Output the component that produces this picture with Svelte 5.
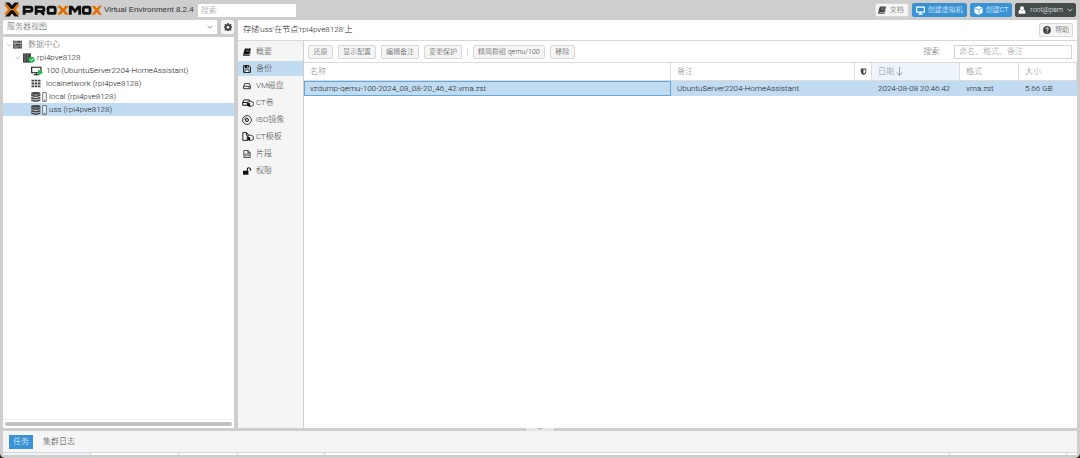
<script>
  const tree = [
    { label: '数据中心', icon: 'server', level: 0, open: true },
    { label: 'rpi4pve8128', icon: 'node', level: 1, open: true },
    { label: '100 (UbuntuServer2204-HomeAssistant)', icon: 'vm', level: 2 },
    { label: 'localnetwork (rpi4pve8128)', icon: 'grid', level: 2 },
    { label: 'local (rpi4pve8128)', icon: 'storage', level: 2 },
    { label: 'uss (rpi4pve8128)', icon: 'storage', level: 2 }
  ];
  const menu = [
    ['book', '概要'], ['floppy', '备份'], ['hdd', 'VM磁盘'], ['ctdisk', 'CT卷'],
    ['disc', 'ISO镜像'], ['cttemplate', 'CT模板'], ['code', '片段'], ['unlock', '权限']
  ];
  const actions = ['还原', '显示配置', '编辑备注', '变更保护'];
  const wide = { storage: 22, node: 18, vm: 18, ctdisk: 18, cttemplate: 18 };
  let node = $state(5);
  let tab = $state(1);
</script>

{#snippet icon(name)}
  <svg class="icon {name}" viewBox="0 0 {wide[name] ?? 14} 14" aria-hidden="true">
    {#if name === 'server'}
      <path d="M0 1h14v3.400H0zM0 5.400h14v3.400H0zM0 9.800h14v3.400H0z" fill="currentColor" />
      <path d="M1.500 2.700h6M1.500 7.100h3M1.500 11.500h6M11 2.700h1.500M11 7.100h1.500M11 11.500h1.500" stroke="#fff" stroke-width=".6" />
    {:else if name === 'node'}
      <path d="M0 0h12v14H0z" fill="currentColor" />
      <path d="M2 2.500h2M6 2.500h2M2 5.500h2M6 5.500h2M2 8.500h2M6 8.500h2M2 11.500h2" stroke="#999" stroke-width="1.200" />
      <circle cx="13" cy="9.500" r="4.500" fill="#21bf4b" />
      <path d="m10.700 9.500 1.700 1.700 3-3.300" fill="none" stroke="#fff" stroke-width="1.400" />
    {:else if name === 'vm'}
      <path d="M1 1.500h14v8H1zM8 9.500v3M4 12.700h7" fill="#fff" stroke="#111" stroke-width="1.600" />
      <path d="m10.500 4.500 7.500 5-7.500 4.500z" fill="#21bf4b" />
    {:else if name === 'grid'}
      <path d="M0 1h4v3H0zM5 1h4v3H5zM10 1h4v3h-4zM0 5.500h4v3H0zM5 5.500h4v3H5zM10 5.500h4v3h-4zM0 10h4v3H0zM5 10h4v3H5zM10 10h4v3h-4z" fill="currentColor" />
    {:else if name === 'storage'}
      <ellipse cx="6.500" cy="2" rx="6.500" ry="2" fill="currentColor" />
      <path d="M0 3.300q6.500 3 13 0v2.200q-6.500 3-13 0zM0 6.800q6.500 3 13 0V9q-6.500 3-13 0zM0 10.300q6.500 3 13 0v2q-6.500 3.200-13 0z" fill="currentColor" />
      <path d="M16.200.8h5v12.400h-5z" fill="#fff" fill-opacity=".8" stroke="currentColor" stroke-width="1" />
      <path d="M17.700 11.500h2" stroke="currentColor" />
    {:else if name === 'book'}
      <path d="M4.200 1h9.300q.5 0 .3.600l-2.600 8.800q-.3.900-1.200.900H2.400q-1 0-.6.800.2.500.8.500h8.200q.7 0 .9-.7l1.800-6v1.800L12 12.700q-.4 1.200-1.500 1.200H2.200Q0 13.800.2 11.600L2.800 2.200Q3.100 1 4.200 1z" fill="currentColor" />
      <path d="M5.500 3.700h5.300M4.900 5.800h5.300" stroke="#aaa" stroke-width=".9" />
    {:else if name === 'floppy'}
      <path d="M1 1h9.500L13 3.500V13H1z" fill="none" stroke="currentColor" stroke-width="1.600" />
      <path d="M3 1h7v4.500H3zM3 8h8v5H3z" fill="currentColor" />
      <path d="M7.500 1.700h1.500v2.500H7.500zM4.200 9.200h5.600v3H4.200z" fill="#fff" />
    {:else if name === 'hdd'}
      <path d="M1 7.500 3 2.800h8l2 4.700v4.200H1zM1 7.500h12M8.500 9.700h1M11 9.700h1" fill="none" stroke="currentColor" stroke-width="1.400" />
    {:else if name === 'ctdisk'}
      <path d="M.8 7 3 3h8l1.500 3M.8 7v4.300H9M.8 7H9" fill="none" stroke="currentColor" stroke-width="1.500" />
      <path d="m12.500 4.800 4.700 1.900v4.800l-4.700 2-4.700-2V6.700z" fill="#fff" stroke="currentColor" stroke-width="1.200" />
      <path d="m7.800 6.700 4.700 2v4.800l-4.700-2z" fill="currentColor" />
    {:else if name === 'disc'}
      <circle cx="7" cy="7" r="6.200" fill="none" stroke="currentColor" stroke-width="1.100" />
      <circle cx="7" cy="7" r="2" fill="none" stroke="currentColor" stroke-width="1.500" />
      <path d="M3 7q0-4 4-4" fill="none" stroke="currentColor" stroke-width=".6" />
    {:else if name === 'cttemplate'}
      <path d="M9 13H1V1h5.500l4 3.500M6.500 1v4H9" fill="none" stroke="currentColor" stroke-width="1.400" />
      <path d="m12.500 4.800 4.700 1.900v4.800l-4.700 2-4.700-2V6.700z" fill="#fff" stroke="currentColor" stroke-width="1.200" />
      <path d="m7.800 6.700 4.700 2v4.800l-4.700-2z" fill="currentColor" />
    {:else if name === 'code'}
      <path d="M1.500.8h7.300l3.700 3.700v8.700h-11zM8.500 1v3.800h4M5 6 3.300 8.500 5 11M9 6l1.700 2.500L9 11M7.500 6l-1 5" fill="none" stroke="currentColor" stroke-width="1.300" />
    {:else if name === 'unlock'}
      <path d="M0 6.500h9.500v7H0z" fill="currentColor" />
      <path d="M7.500 7V4q0-2.700 2.700-2.700T12.900 4v2.500" fill="none" stroke="currentColor" stroke-width="1.900" />
    {:else if name === 'gear'}
      <path d="M5.800 0h2.400l.4 2 1.200.5 1.700-1.200 1.800 1.800-1.200 1.600.5 1.200 1.900.4v2.400l-1.900.4-.5 1.200 1.200 1.600-1.800 1.800-1.700-1.200-1.200.5-.4 2H5.800l-.4-2-1.200-.5-1.700 1.200L.7 11.900l1.200-1.600-.5-1.200L0 8.700V6.300l1.400-.4.5-1.200L.7 3.100l1.800-1.800 1.700 1.200L5.400 2z" fill="currentColor" />
      <circle cx="7" cy="7.400" r="2.300" fill="#f5f5f5" />
    {:else if name === 'monitor'}
      <path d="M1 1.800h12v7.700H1zM7 9.500v3M3.500 12.700h7" fill="none" stroke="currentColor" stroke-width="1.700" />
    {:else if name === 'cube'}
      <path d="m7 0 6.300 2.800v7.700L7 14 .7 10.500V2.800z" fill="currentColor" />
      <path d="M1.800 3.600 7 5.800l5.200-2.200M7.700 6.800v5" fill="none" stroke="#3892d4" stroke-width="1.200" />
    {:else if name === 'user'}
      <circle cx="7" cy="3.800" r="3.500" fill="currentColor" />
      <path d="M1 13.500V10q0-3 3-3.300 3 2 6 0 3 .3 3 3.300v3.500z" fill="currentColor" />
    {:else if name === 'help'}
      <circle cx="7" cy="7" r="6.800" fill="currentColor" />
      <path d="M4.800 5.200q.2-2 2.300-2t2.200 1.800c0 1.500-2.200 1.500-2.200 3.300M7.100 9.700v1.800" fill="none" stroke="#fff" stroke-width="1.700" />
    {:else if name === 'shield'}
      <path d="M1.500 1h11v6q0 4.500-5.500 7-5.500-2.500-5.500-7z" fill="currentColor" />
      <path d="M7 3h3.700v4.200q0 2.500-3.700 4.300z" fill="#fff" />
    {:else if name === 'chevron'}
      <path d="m1.500 4.500 5.500 5 5.500-5" fill="none" stroke="currentColor" stroke-width="1.500" />
    {:else if name === 'arrow'}
      <path d="M7 0v13M2.500 8.500 7 13l4.500-4.500" fill="none" stroke="currentColor" stroke-width="1.300" />
    {/if}
  </svg>
{/snippet}

<div class="app">
  <header>
    <svg class="logo" viewBox="0 0 98 16" role="img" aria-label="Proxmox">
      <path d="M1 .5h4.500l2.500 3 2.500-3H15L9.900 6.600 8 8.600 6.100 6.600zM1 14.500h4.500l2.500-3 2.500 3H15L9.900 8.400 8 6.400 6.100 8.400z" fill="#111" />
      <path d="M0 2.500h3.200L7.300 7.500l-4.100 5H0l4-5zM16 2.500h-3.200L8.700 7.500l4.100 5H16l-4-5z" fill="#e57000" />
      <g fill="none" stroke="#111" stroke-width="2.800">
        <path d="M20.100 12.800V5.100h6q1.800 0 1.800 1.500v1.200q0 1.500-1.800 1.500h-6M32.100 12.800V5.100h6q1.800 0 1.800 1.500v1.200q0 1.500-1.800 1.500h-6M36.800 9.300l3.300 3.500" />
        <rect x="44" y="5.100" width="7.200" height="6.300" rx="1.500" />
        <path d="M66.300 12.800V5.100h1.300l3.400 4 3.400-4h1.300v7.700" />
        <rect x="79.300" y="5.100" width="6.700" height="6.300" rx="1.500" />
      </g>
      <path d="M53 3.700h3.700L59 6.500l2.300-2.800H65l-4 4.550 4 4.550h-3.700L59 10l-2.300 2.800H53l4-4.550zM87.500 3.700h3.200l2.050 2.700 2.050-2.700H98l-3.600 4.550L98 12.800h-3.200l-2.050-2.700-2.050 2.700h-3.200l3.600-4.550z" fill="#e57000" />
    </svg>
    <span class="version">Virtual Environment 8.2.4</span>
    <input class="global-search" aria-label="搜索" placeholder="搜索" />
    <span class="grow"></span>
    <button class="btn docs">{@render icon('book')}文档</button>
    <button class="btn primary">{@render icon('monitor')}创建虚拟机</button>
    <button class="btn primary">{@render icon('cube')}创建CT</button>
    <button class="btn user-menu">{@render icon('user')}root@pam{@render icon('chevron')}</button>
  </header>

  <div class="body">
    <aside>
      <div class="view-row">
        <label class="view">
          <select aria-label="视图"><option>服务器视图</option></select>
          {@render icon('chevron')}
        </label>
        <button class="btn square" aria-label="设置">{@render icon('gear')}</button>
      </div>
      <div class="tree">
        {#each tree as item, i}
          <button class="row l{item.level}" class:selected={node === i} onclick={() => (node = i)}>
            <span class="twist">{#if item.open}{@render icon('chevron')}{/if}</span>
            {@render icon(item.icon)}<span>{item.label}</span>
          </button>
        {/each}
        <div class="scroll"><div class="thumb"></div></div>
      </div>
    </aside>

    <main>
      <div class="title">
        <span>存储'uss'在节点'rpi4pve8128'上</span>
        <button class="btn">{@render icon('help')}帮助</button>
      </div>
      <div class="content">
        <nav>
          {#each menu as [glyph, label], i}
            <button class:selected={tab === i} onclick={() => (tab = i)}>
              <span class="slot">{@render icon(glyph)}</span>{label}
            </button>
          {/each}
        </nav>
        <section>
          <div class="toolbar">
            {#each actions as a}<button class="btn">{a}</button>{/each}
            <span class="sep"></span>
            <button class="btn">精简群组 qemu/100</button>
            <button class="btn">移除</button>
            <span class="grow"></span>
            <label for="filter">搜索:</label>
            <input id="filter" placeholder="命名、格式、备注" />
          </div>
          <table>
            <colgroup><col /><col class="c-note" /><col class="c-shield" /><col class="c-date" /><col class="c-format" /><col class="c-size" /></colgroup>
            <thead>
              <tr>
                <th>名称</th><th>备注</th><th class="mid">{@render icon('shield')}</th>
                <th class="sorted">日期 {@render icon('arrow')}</th><th>格式</th><th>大小</th>
              </tr>
            </thead>
            <tbody>
              <tr>
                <td class="focus">vzdump-qemu-100-2024_08_08-20_46_42.vma.zst</td>
                <td>UbuntuServer2204-HomeAssistant</td><td></td>
                <td>2024-08-08 20:46:42</td><td>vma.zst</td><td>5.66 GB</td>
              </tr>
            </tbody>
          </table>
        </section>
      </div>
    </main>
  </div>

  <div class="splitter"><span class="handle"></span></div>
  <footer>
    <div class="tabs">
      <button class="active">任务</button>
      <button>集群日志</button>
    </div>
    <div class="log-head"><i></i><i></i><i></i><i></i><i></i><i></i></div>
  </footer>
</div>

<style>
  :global(body) { margin: 0; background: #29231b; }
  .app, .app * { box-sizing: border-box; }
  .app {
    min-height: 100vh; display: flex; flex-direction: column;
    padding: 0 3px 3px; background: #cecece; border-radius: 0 0 5px 5px;
    font: 300 8px/12px Roboto, "Noto Sans CJK SC", sans-serif; color: #111;
  }
  button, input, select { font: inherit; color: inherit; margin: 0; border: 0; border-radius: 0; outline: none; }
  button { background: none; padding: 0; white-space: nowrap; cursor: pointer; }
  .icon { width: 9px; height: 9px; flex: none; }
  .grow { flex: 1; }
  input::placeholder { color: #999; opacity: 1; }

  header { display: flex; align-items: center; height: 20px; gap: 4px; padding: 0 1px; }
  .logo { width: 98px; height: 16px; flex: none; }
  .version { margin-left: -2px; font-family: "Liberation Sans", sans-serif; color: #333; white-space: nowrap; }
  .global-search { width: 98px; height: 13px; padding: 0 3px; background: #fff; }

  .btn {
    display: flex; align-items: center; justify-content: center; gap: 4px;
    height: 14px; padding: 0 5px; background: #f5f5f5; border: 1px solid #d8d8d8;
    border-radius: 2px; font-size: 7px; color: #444;
  }
  header .btn { padding: 0 2px; margin-left: -1px; }
  .btn.docs { padding: 0 4px 0 2px; }
  .docs .icon, .title .icon, .square .icon { width: 8px; height: 8px; }
  .btn.primary { background: #3892d4; border-color: #3892d4; color: #fff; gap: 3px; padding: 0 3px; }
  .btn.user-menu { background: #464d4d; border-color: #464d4d; color: #fff; gap: 4px; padding: 0 2px; }
  .user-menu .icon { width: 8px; height: 8px; }
  .user-menu .chevron { width: 6px; height: 6px; }

  .body { flex: 1; display: flex; gap: 4px; }
  aside { width: 231px; flex: none; display: flex; flex-direction: column; gap: 3px; }
  .view-row { display: flex; gap: 4px; height: 14px; }
  .view { flex: 1; display: flex; align-items: center; background: #fff; padding-right: 4px; color: #555; }
  .view select { flex: 1; appearance: none; background: none; padding: 0 4px; }
  .view .chevron { width: 6px; height: 6px; }
  .square { width: 13px; padding: 0; border-color: #f5f5f5; color: #444; }
  .tree { flex: 1; display: flex; flex-direction: column; background: #fff; padding-top: 1px; }
  .row { display: flex; align-items: center; gap: 4px; height: 13px; text-align: left; }
  .row .icon { color: #444; }
  .row .node { width: 12px; height: 10px; }
  .row .vm { width: 12px; height: 10px; margin-right: -1px; }
  .row .grid { width: 10px; margin-right: 1px; }
  .row .storage { width: 16px; height: 10px; margin-right: -2px; }
  .twist { width: 6px; display: flex; }
  .row .twist .icon { width: 6px; height: 6px; color: #aaa; }
  .l0 { padding-left: 3px; gap: 1px; color: #555; }
  .l0 > span:last-child { margin-left: 5px; }
  .l1 { padding-left: 12px; gap: 2px; }
  .l2 { padding-left: 18px; }
  .selected { background: #c1dcf1; }
  .scroll { margin-top: auto; border-top: 1px solid #eee; padding: 2px; }
  .thumb { height: 4px; border-radius: 2px; background: #c2c2c2; }

  main { flex: 1; min-width: 0; display: flex; flex-direction: column; background: #fff; }
  .title { display: flex; align-items: center; justify-content: space-between; height: 21px; padding: 0 4px 0 5px; border-bottom: 1px solid #d8d8d8; }
  .title .btn { padding: 0 3px; }
  .content { flex: 1; display: flex; }
  nav { width: 66px; flex: none; background: #f5f5f5; border-right: 1px solid #cfcfcf; padding-top: 2px; }
  nav button { display: flex; align-items: center; width: 100%; height: 17px; padding-left: 4px; color: #444; }
  nav button.selected { height: 15px; margin: 1px 0; }
  .slot { width: 14px; display: flex; }
  .slot .icon { width: 8px; height: 8px; color: #111; margin-left: 1px; }
  .slot .ctdisk, .slot .cttemplate { width: 12px; height: 9px; margin-left: 0; }
  .slot .disc { width: 10px; height: 10px; margin-left: 0; }

  section { flex: 1; min-width: 0; }
  .toolbar { display: flex; align-items: center; gap: 5px; height: 21px; padding: 0 5px 0 4px; }
  .sep { width: 1px; height: 8px; background: #ddd; }
  .toolbar label { color: #666; margin-right: 8px; }
  .toolbar input { width: 118px; height: 14px; border: 1px solid #d5d5d5; padding: 0 4px; }
  .toolbar .btn { padding: 0 4px; min-width: 25px; }
  table { width: 100%; table-layout: fixed; border-collapse: separate; border-spacing: 0; }
  .c-note { width: 184px; } .c-shield { width: 17px; } .c-date { width: 88px; } .c-format { width: 59px; } .c-size { width: 58px; }
  th { height: 19px; padding: 0 6px; text-align: left; font-weight: 300; color: #888; border: solid #dcdcdc; border-width: 1px 1px 1px 0; }
  th .icon { vertical-align: middle; margin-left: -1px; }
  th.mid { padding: 0; text-align: center; color: #444; }
  th .shield { width: 7px; height: 7px; margin: 0; }
  .sorted { background: #edf4fb; }
  td { height: 15px; padding: 0 5px; background: #c1dcf1; white-space: nowrap; border: 1px solid #c1dcf1; border-right-width: 0; }
  td.focus { border: 1px solid #5fa7dc; }

  .splitter { height: 3px; display: flex; justify-content: center; }
  .handle { width: 28px; background: #e5e5e5; display: flex; justify-content: center; }
  .handle::after { content: ""; width: 0; height: 0; border: solid transparent; border-width: 2px 3px 0; border-top-color: #bbb; }
  footer { background: #f5f5f5; }
  .tabs { display: flex; align-items: center; gap: 4px; height: 21px; padding: 0 6px; }
  .tabs button { height: 14px; padding: 0 6px; color: #333; }
  .tabs .active { background: #3892d4; color: #fff; padding: 0 4px; }
  .log-head { display: grid; grid-template-columns: 88fr 88fr 59fr 87fr 625fr 117fr 10px; height: 3px; border-top: 1px solid #d8d8d8; background: #fff; }
  .log-head i { border-right: 1px solid #d0d0d0; }
  .log-head i:first-child { background: #edf4fb; }
</style>
